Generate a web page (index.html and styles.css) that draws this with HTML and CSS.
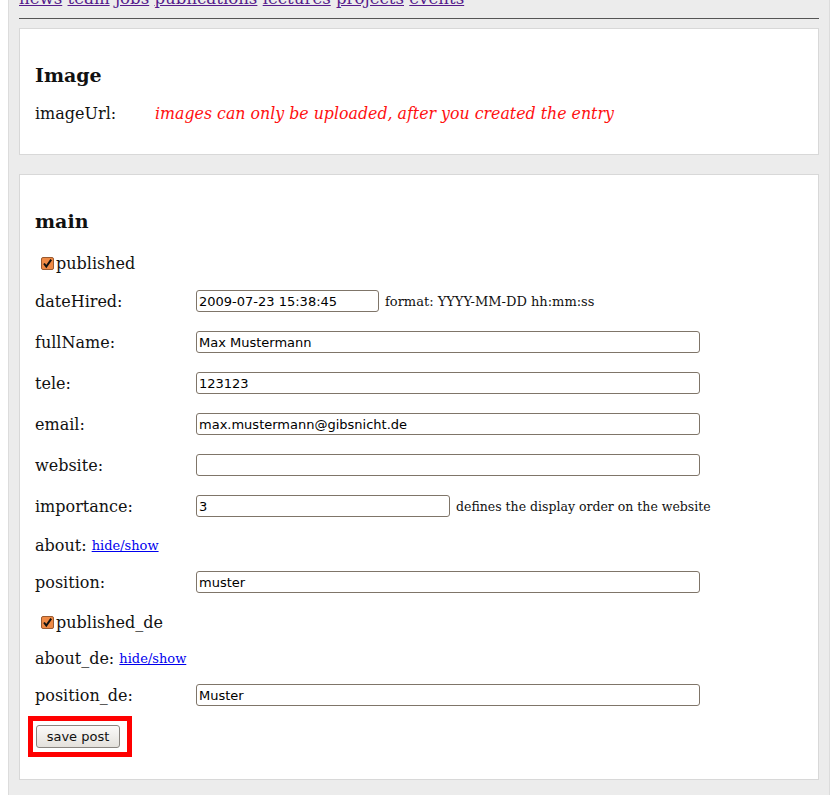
FILE: index.html
```html
<!DOCTYPE html>
<html>
<head>
<meta charset="utf-8">
<link rel="stylesheet" href="styles.css">
</head>
<body>
<div class="page">
  <div class="nav">
    <a href="#">news</a> <a href="#">team</a> <a href="#">jobs</a> <a href="#">publications</a> <a href="#">lectures</a> <a href="#">projects</a> <a href="#">events</a>
  </div>
  <div class="rule"></div>

  <div class="panel">
    <h3 class="heading">Image</h3>
    <div class="img-row">
      <span class="img-label">imageUrl:</span>
      <span class="warn">images can only be uploaded, after you created the entry</span>
    </div>
  </div>

  <div class="panel panel-main">
    <h3 class="heading">main</h3>

    <div class="row check-row">
      <span class="box"><svg width="13" height="13" viewBox="0 0 13 13"><rect x="0.5" y="0.5" width="12" height="12" rx="1.5" fill="#ef8a45" stroke="#9a5a30"/><path d="M3 6.5 L5.3 9.6 L10.2 2.6" fill="none" stroke="#111" stroke-width="2"/></svg></span>
      <span class="lbl">published</span>
    </div>

    <div class="row input-row">
      <span class="label">dateHired:</span>
      <input class="field field-date" type="text" value="2009-07-23 15:38:45">
      <span class="hint">format: YYYY-MM-DD hh:mm:ss</span>
    </div>

    <div class="row input-row">
      <span class="label">fullName:</span>
      <input class="field" type="text" value="Max Mustermann">
    </div>

    <div class="row input-row">
      <span class="label">tele:</span>
      <input class="field" type="text" value="123123">
    </div>

    <div class="row input-row">
      <span class="label">email:</span>
      <input class="field" type="text" value="max.mustermann@gibsnicht.de">
    </div>

    <div class="row input-row">
      <span class="label">website:</span>
      <input class="field" type="text" value="">
    </div>

    <div class="row input-row">
      <span class="label">importance:</span>
      <input class="field field-imp" type="text" value="3">
      <span class="hint hint-small">defines the display order on the website</span>
    </div>

    <div class="row link-row">
      <span class="lbl">about:</span>&nbsp;<a class="toggle" href="#">hide/show</a>
    </div>

    <div class="row input-row">
      <span class="label">position:</span>
      <input class="field" type="text" value="muster">
    </div>

    <div class="row check-row">
      <span class="box"><svg width="13" height="13" viewBox="0 0 13 13"><rect x="0.5" y="0.5" width="12" height="12" rx="1.5" fill="#ef8a45" stroke="#9a5a30"/><path d="M3 6.5 L5.3 9.6 L10.2 2.6" fill="none" stroke="#111" stroke-width="2"/></svg></span>
      <span class="lbl">published_de</span>
    </div>

    <div class="row link-row">
      <span class="lbl">about_de:</span>&nbsp;<a class="toggle" href="#">hide/show</a>
    </div>

    <div class="row input-row">
      <span class="label">position_de:</span>
      <input class="field" type="text" value="Muster">
    </div>

    <div class="save-wrap">
      <button class="save" type="button">save post</button>
    </div>
  </div>
</div>
</body>
</html>
```

FILE: styles.css
```css
html, body {
  margin: 0;
  padding: 0;
  background: #ffffff;
}

body {
  font-family: "DejaVu Serif", serif;
  color: #111;
  overflow: hidden;
}

.page {
  margin-left: 8px;
  width: 800px;
  padding: 0 10px;
  background: #ececec;
  border-left: 1px solid #dcdcdc;
  border-right: 1px solid #dcdcdc;
  min-height: 820px;
}

.nav {
  margin-top: -12px;
  font-size: 16.6px;
  line-height: 22px;
  white-space: nowrap;
}

.nav a {
  color: #551a8b;
  text-decoration: underline;
}

.rule {
  margin-top: 8px;
  height: 1px;
  background: #555;
}

.panel {
  margin-top: 9px;
  background: #fff;
  border: 1px solid #d8d8d8;
  padding: 0 15px 29px;
}

.panel-main {
  margin-top: 19px;
  padding-bottom: 22px;
  display: flex;
  flex-direction: column;
  align-items: flex-start;
}

.heading {
  margin: 35px 0 0;
  font-size: 19px;
  line-height: 22px;
  font-weight: bold;
}

.img-row {
  margin-top: 15px;
  display: flex;
  align-items: center;
  height: 24px;
  font-size: 16px;
}

.img-label {
  width: 120px;
}

.warn {
  color: #ff1010;
  font-style: italic;
  font-size: 15.8px;
}

.row {
  display: flex;
  align-items: center;
  font-size: 16px;
  white-space: nowrap;
}

.check-row {
  height: 16px;
  margin-top: 21px;
  padding-left: 6px;
}

.panel-main .heading + .check-row {
  margin-top: 23px;
}

.box {
  display: flex;
  width: 13px;
  height: 13px;
  margin-right: 2px;
}

.input-row {
  height: 22px;
  margin-top: 19px;
}

.link-row {
  height: 14px;
  margin-top: 21px;
}

.label {
  width: 161px;
}

.field {
  box-sizing: border-box;
  width: 504px;
  height: 22px;
  margin: 0;
  padding: 1px 2px;
  border: 1px solid #7f7569;
  border-radius: 3px;
  background: #fff;
  font-family: "DejaVu Sans", sans-serif;
  font-size: 13px;
  color: #000;
}

.field-date {
  width: 183px;
}

.field-imp {
  width: 254px;
}

.hint {
  margin-left: 6px;
  font-size: 13px;
}

.hint-small {
  font-size: 12.5px;
}

.toggle {
  font-size: 13px;
  color: #0000ee;
  text-decoration: underline;
}

.save-wrap {
  margin-top: 10px;
  margin-left: -7px;
  border: 5px solid #ff0000;
  padding: 4px 7px 4px 3px;
  display: flex;
}

.save {
  width: 84px;
  height: 23px;
  margin: 0;
  padding: 0;
  border: 1px solid #8a8580;
  border-radius: 3px;
  background: linear-gradient(#fbfaf9, #e4e1dc);
  font-family: "DejaVu Sans", sans-serif;
  font-size: 13px;
  color: #111;
}
```
